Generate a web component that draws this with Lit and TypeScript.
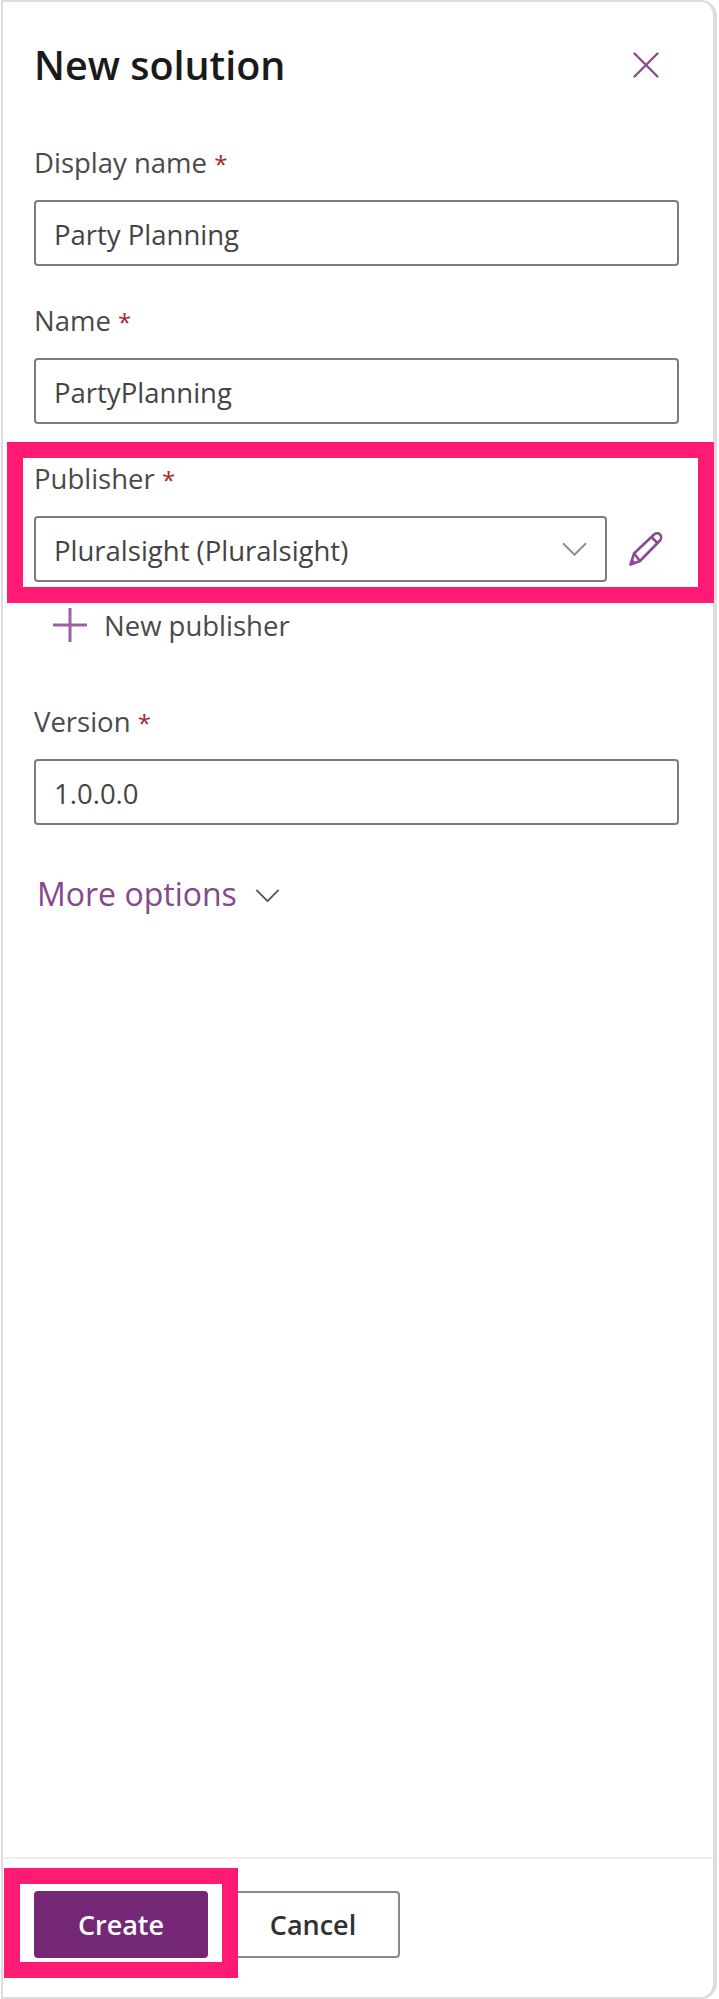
import { html, css, LitElement } from 'lit';
import { customElement } from 'lit/decorators.js';

const chevron = html`<svg viewBox="0 0 26 14" fill="none" stroke="currentColor" stroke-width="2"><path d="M1 1l12 12L25 1"/></svg>`;

@customElement('app-root')
export class AppRoot extends LitElement {
  static styles = css`
    :host {
      display: block;
      background: #fff;
      font-family: 'Open Sans', 'Noto Sans', sans-serif;
      color: #3b3a39;
    }

    .panel {
      position: relative;
      box-sizing: border-box;
      display: flex;
      flex-direction: column;
      width: 716px;
      height: 1999px;
      margin-left: 1px;
      border: solid #ddd;
      border-width: 2px 4px 2px 2px;
      border-radius: 0 16px 16px 0;
      background: #fff;
    }

    .header {
      display: flex;
      justify-content: space-between;
      align-items: center;
      height: 140px;
      box-sizing: border-box;
      padding: 0 54px 14px 31px;
    }

    h1 {
      margin: 0;
      font-size: 39.5px;
      line-height: 48px;
      font-weight: 600;
      color: #1a1a1a;
    }

    .close {
      width: 26px;
      height: 26px;
      color: #8b4b93;
    }

    .form {
      display: flex;
      flex-direction: column;
      padding: 0 34px 0 31px;
    }

    .label {
      height: 40px;
      margin-bottom: 18px;
      font-size: 27.5px;
      line-height: 42px;
      color: #4a4a4a;
    }

    .label b {
      font-weight: 400;
      font-size: 24px;
      color: #a4262c;
    }

    .control {
      box-sizing: border-box;
      display: flex;
      align-items: center;
      justify-content: space-between;
      height: 66px;
      padding: 2px 18px 0;
      border: 2.5px solid #7c7c7c;
      border-radius: 4px;
      font-size: 27.5px;
      color: #444;
    }

    .field {
      margin-bottom: 34px;
    }

    .field.publisher {
      margin-bottom: 0;
    }

    .select-row {
      display: flex;
      align-items: center;
    }

    .select-row .control {
      width: 573px;
    }

    .control svg {
      width: 25px;
      height: 14px;
      margin-top: -2px;
      color: #8f8f8f;
    }

    .edit {
      width: 34px;
      height: 34px;
      margin-left: 22px;
      color: #8b4b93;
    }

    .add {
      display: flex;
      align-items: center;
      gap: 17px;
      height: 44px;
      margin: 21px 0 54px 19px;
      font-size: 27.5px;
      color: #4a4a4a;
    }

    .add svg {
      width: 34px;
      height: 34px;
      color: #9b62a1;
    }

    .more {
      display: flex;
      align-items: center;
      gap: 18px;
      height: 44px;
      margin: 12px 0 0 3px;
      font-size: 32px;
      color: #85478d;
    }

    .more svg {
      width: 25px;
      height: 13px;
      margin-top: 4px;
      color: #555;
    }

    .footer {
      display: flex;
      gap: 18px;
      margin-top: auto;
      height: 140px;
      box-sizing: border-box;
      padding: 32px 0 0 31px;
      border-top: 2px solid #eee;
    }

    .btn {
      box-sizing: border-box;
      width: 174px;
      height: 67px;
      border: 2.5px solid #8a8a8a;
      border-radius: 4px;
      background: #fff;
      font: 600 27px 'Open Sans', 'Noto Sans', sans-serif;
      color: #323130;
    }

    .btn.primary {
      border-color: #742774;
      background: #742774;
      color: #fff;
    }

    /* pink annotation frames drawn over the screenshot */
    .mark {
      position: absolute;
      box-sizing: border-box;
      border: 16px solid #ff1b73;
      pointer-events: none;
    }

    .mark.publisher {
      left: 4px;
      top: 440px;
      width: 707px;
      height: 161px;
    }

    .mark.create {
      left: 1px;
      top: 1866px;
      width: 234px;
      height: 110px;
    }
  `;

  private field(label: string, value: string) {
    return html`
      <div class="field">
        <div class="label">${label} <b>*</b></div>
        <div class="control">${value}</div>
      </div>
    `;
  }

  render() {
    return html`
      <div class="panel">
        <div class="header">
          <h1>New solution</h1>
          <svg class="close" viewBox="0 0 26 26" fill="none" stroke="currentColor" stroke-width="2.4" stroke-linecap="round"><path d="M1.500 1.500l23 23M24.500 1.500l-23 23"/></svg>
        </div>
        <div class="form">
          ${this.field('Display name', 'Party Planning')}
          ${this.field('Name', 'PartyPlanning')}
          <div class="field publisher">
            <div class="label">Publisher <b>*</b></div>
            <div class="select-row">
              <div class="control">Pluralsight (Pluralsight) ${chevron}</div>
              <svg class="edit" viewBox="0 0 34 34" fill="none" stroke="currentColor" stroke-width="2.6" stroke-linejoin="round"><path d="M1.500 32.500L5 21.500 24.500 3c2.500-2.300 5-2 6.500-.5s1.800 4.200-.5 6.500L11 29z"/><path d="M5 21.500l6 7.500M2.800 28l3 3.500M22.500 5l6.500 6.500"/></svg>
            </div>
          </div>
          <div class="add">
            <svg viewBox="0 0 34 34" fill="none" stroke="currentColor" stroke-width="3"><path d="M17 0v34M0 17h34"/></svg>
            New publisher
          </div>
          ${this.field('Version', '1.0.0.0')}
          <div class="more">More options ${chevron}</div>
        </div>
        <div class="footer">
          <button class="btn primary">Create</button>
          <button class="btn">Cancel</button>
        </div>
        <div class="mark publisher"></div>
        <div class="mark create"></div>
      </div>
    `;
  }
}
